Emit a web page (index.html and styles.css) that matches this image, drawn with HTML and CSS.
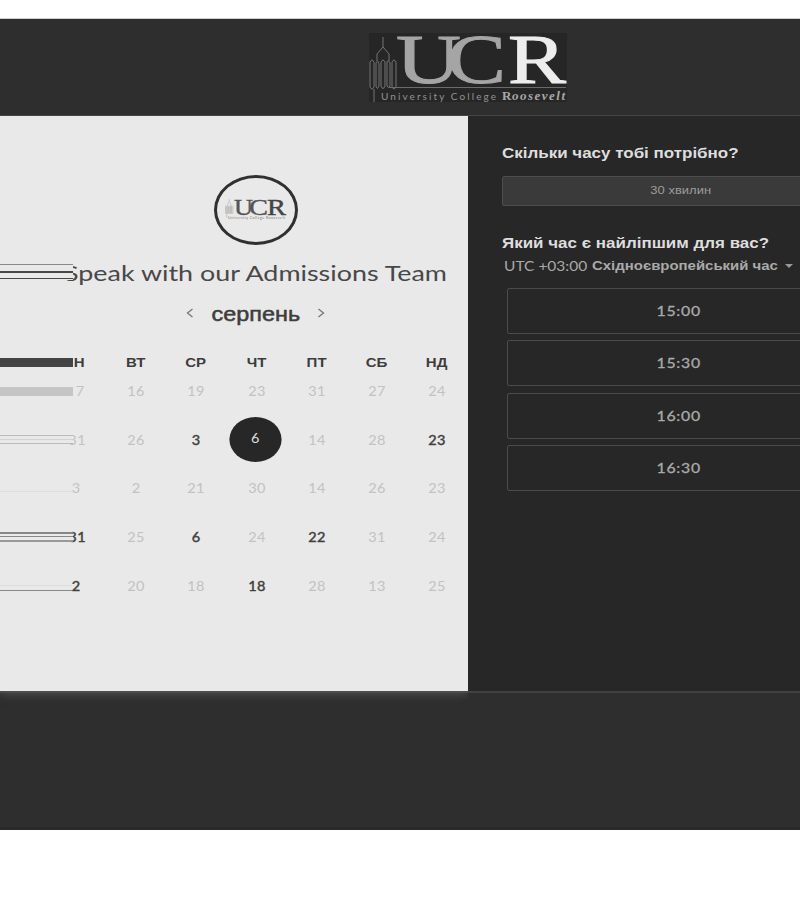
FILE: index.html
```
<!DOCTYPE html>
<html lang="uk">
<head>
<meta charset="utf-8">
<title>University College Roosevelt</title>
<link rel="stylesheet" href="styles.css">
</head>
<body>
<svg width="0" height="0" class="defs" aria-hidden="true">
  <symbol id="tower" viewBox="0 0 30 70">
    <path d="M14 4V14M14 14L8 21V28M14 14L20 21V28M1 29Q3 25 5 29V54Q3 58 1 54ZM7 30Q9 26 10 31V53Q8 58 7 53ZM12 29Q14 25 16 29V53Q14 58 12 53ZM18 29Q19 26 21 30V53Q19 56 18 53ZM23 29Q25 25 27 29V54Q25 58 23 54ZM5 56V69M20.500 54V55"/>
  </symbol>
</svg>
<main class="page">
  <header class="top">
    <svg class="logo" viewBox="0 0 198 69">
      <rect width="198" height="69" fill="#262626"/>
      <use href="#tower" width="30" height="70" class="tower"/>
      <path d="M20 54.500H197" stroke="#6b6b6b"/>
      <g class="serif" font-size="70">
        <text x="27" y="50" textLength="65" lengthAdjust="spacingAndGlyphs" fill="#a5a5a5" stroke="#a5a5a5" stroke-width="1">U</text>
        <text x="78" y="50" textLength="59" lengthAdjust="spacingAndGlyphs" fill="#a5a5a5" stroke="#a5a5a5" stroke-width="1">C</text>
        <text x="139" y="50" textLength="58" lengthAdjust="spacingAndGlyphs" fill="#ededed" stroke="#ededed" stroke-width="1">R</text>
      </g>
      <text x="12" y="66.500" class="sans" font-size="10" textLength="115" fill="#929292">University College</text>
      <text x="133" y="66.500" class="serif" font-size="13" font-weight="bold" fill="#a8a8a8">R</text>
      <text x="143" y="66.500" class="serif" font-size="13" font-weight="bold" font-style="italic" textLength="53" fill="#a8a8a8">oosevelt</text>
    </svg>
  </header>
  <div class="booking">
    <section class="calendar">
      <div class="badge">
        <svg class="mini" viewBox="0 0 62 24">
          <use href="#tower" width="9" height="20" class="mini-tower"/>
          <g class="serif" font-size="23">
            <text x="9" y="17" textLength="19" lengthAdjust="spacingAndGlyphs" fill="#555" stroke="#555" stroke-width=".4">U</text>
            <text x="24" y="17" textLength="19" lengthAdjust="spacingAndGlyphs" fill="#555" stroke="#555" stroke-width=".4">C</text>
            <text x="42" y="17" textLength="19" lengthAdjust="spacingAndGlyphs" fill="#444" stroke="#444" stroke-width=".4">R</text>
          </g>
          <text x="3" y="20.500" class="sans" font-size="3.500" textLength="57" fill="#777">University College Roosevelt</text>
        </svg>
      </div>
      <div class="title-row"><h1 class="title">Speak with our Admissions Team</h1><i class="smear smear-title"></i></div>
      <div class="month">
        <svg class="arrow" viewBox="0 0 8 10"><path d="M6.500 1L1.500 5L6.500 9"/></svg>
        <span class="month-name"><b>серпень</b></span>
        <svg class="arrow" viewBox="0 0 8 10"><path d="M1.500 1L6.500 5L1.500 9"/></svg>
      </div>
      <div class="week names"><span class="end">Н</span><span>ВТ</span><span>СР</span><span>ЧТ</span><span>ПТ</span><span>СБ</span><span>НД</span><i class="smear smear-names"></i></div>
      <div class="week"><span class="seven">7</span><span>16</span><span>19</span><span>23</span><span>31</span><span>27</span><span>24</span><i class="smear smear-1"></i></div>
      <div class="week"><span class="end">31</span><span>26</span><span class="on">3</span><span class="picked"><em>6</em></span><span>14</span><span>28</span><span class="on">23</span><i class="smear smear-2"></i></div>
      <div class="week"><span>3</span><span>2</span><span>21</span><span>30</span><span>14</span><span>26</span><span>23</span><i class="smear smear-3"></i></div>
      <div class="week"><span class="on end">31</span><span>25</span><span class="on">6</span><span>24</span><span class="on">22</span><span>31</span><span>24</span><i class="smear smear-4"></i></div>
      <div class="week"><span class="on">2</span><span>20</span><span>18</span><span class="on">18</span><span>28</span><span>13</span><span>25</span><i class="smear smear-5"></i></div>
    </section>
    <section class="options">
      <h2 class="q">Скільки часу тобі потрібно?</h2>
      <div class="duration"><span>30 хвилин</span></div>
      <h2 class="q">Який час є найліпшим для вас?</h2>
      <div class="zone"><span class="utc">UTC +03:00</span><b class="zone-name">Східноєвропейський час</b><i class="caret"></i></div>
      <div class="slots">
        <div class="slot"><span>15:00</span></div>
        <div class="slot"><span>15:30</span></div>
        <div class="slot"><span>16:00</span></div>
        <div class="slot"><span>16:30</span></div>
      </div>
    </section>
  </div>
</main>
</body>
</html>
```
FILE: styles.css
```
* { box-sizing: border-box; }
body { margin: 0; background: #fff; overflow: hidden; font-family: Lato, "Liberation Sans", sans-serif; }
.defs { position: absolute; }
.page { margin-top: 18px; height: 812px; border-top: 1px solid #cfcfcf; border-bottom: 3px solid #292929; background: #2e2e2e; overflow: hidden; }
.top { height: 97px; padding: 14px 0 0 369px; border-bottom: 1px solid #444; }
.logo { display: block; width: 198px; height: 69px; }
.tower { fill: none; stroke: #747474; stroke-width: 1; }
.mini-tower { fill: none; stroke: #999; stroke-width: 1.5; }
.serif { font-family: "Liberation Serif", serif; }
.sans { font-family: Lato, sans-serif; }
.booking { display: flex; width: 894px; height: 577px; border-bottom: 2px solid #414141; }
.calendar { width: 468px; height: 575px; background: #e9e9e9; box-shadow: 0 2px 10px #585858; clip-path: inset(0 0 -16px 0); }
.badge { width: 84px; height: 70px; margin: 59px 0 0 214px; border: 3px solid #303030; border-radius: 50%; padding: 20px 0 0 8px; }
.mini { display: block; width: 62px; height: 24px; }
.title-row { position: relative; height: 30px; margin-top: 13px; padding-left: 64px; }
.title { display: inline-block; margin: 0; font-size: 22px; line-height: 29px; font-weight: 400; color: #484848; white-space: nowrap; transform: scaleX(1.222); transform-origin: 0 50%; }
.month { display: flex; align-items: center; height: 30px; margin-top: 10px; padding-left: 186px; }
.arrow { width: 8px; height: 10px; fill: none; stroke: #777; stroke-width: 1.3; }
.month-name { display: flex; justify-content: center; width: 123px; font: 20px/30px "Liberation Sans", sans-serif; color: #3d3d3d; }
.month-name b { transform: translateY(1px) scaleX(1.17); font-weight: 400; -webkit-text-stroke: .5px #3d3d3d; }
.week { position: relative; display: grid; grid-template-columns: repeat(7, 60.2px); height: 48.7px; padding-left: 46px; font-size: 12.5px; line-height: 22px; color: #c2c2c2; letter-spacing: .4px; }
.week > span { height: 20px; text-align: center; transform: scaleX(1.16); }
.week > span.end { padding-left: 2px; }
.week > span.seven { padding-left: 7px; }
.names { height: 28px; margin-top: 25px; font: bold 12.5px/21px "Liberation Sans", sans-serif; color: #3c3c3c; letter-spacing: 0; }
.names > span { transform: translateX(-.5px) scaleX(1.2); }
.names > span.end { padding-left: 6px; }
.week > .on { color: #404040; -webkit-text-stroke: .4px #404040; }
.week > .picked { display: flex; align-items: center; justify-content: center; width: 45px; height: 45px; margin: -13px 0 0 6.500px; border-radius: 50%; background: #272727; color: #ddd; }
.picked em { font-style: normal; }
.smear { position: absolute; left: 0; width: 73px; }
.smear-title { top: 6px; height: 16px; background: linear-gradient(#888 0 1px, #e9e9e9 1px 7px, #484848 7px 9px, #e9e9e9 9px 14px, #484848 14px 15px, #e9e9e9 15px); }
.smear-names { top: 5px; height: 9px; background: #444; }
.smear-1 { top: 6px; height: 9px; background: #c5c5c5; }
.smear-2 { top: 5px; height: 9px; background: linear-gradient(#bbb 0 1px, #e9e9e9 1px 4px, #d3d3d3 4px 5px, #e9e9e9 5px 8px, #bbb 8px); }
.smear-3 { top: 5px; width: 72px; height: 9px; background: linear-gradient(#e9e9e9 8px, #dfdfdf 8px); }
.smear-4 { top: 5px; height: 10px; background: linear-gradient(#858585 0 2px, #e9e9e9 2px 4px, #888 4px 5px, #e9e9e9 5px 8px, #999 8px); }
.smear-5 { top: 5px; width: 72px; height: 10px; background: linear-gradient(#e9e9e9 4px, #ddd 4px 5px, #e9e9e9 5px 9px, #888 9px); }
.options { width: 426px; height: 575px; padding: 27px 35px 0 34px; background: #272727; }
.q { width: max-content; height: 20px; margin: 0; font: bold 14px/20px "Liberation Sans", sans-serif; color: #dedede; transform: scaleX(1.212); transform-origin: 0 50%; }
.duration { height: 30px; margin: 13px 0 27px; border: 1px solid #4d4d4d; border-radius: 2px; background: #3a3a3a; text-align: center; font: 11px/27px "Liberation Sans", sans-serif; color: #9c9c9c; }
.duration span { display: inline-block; transform: scaleX(1.18); }
.zone { display: flex; align-items: center; height: 20px; margin-top: 3px; padding-left: 2px; color: #aaa; font-size: 12.5px; white-space: nowrap; }
.utc { width: 88px; transform: scaleX(1.24); transform-origin: 0 50%; }
.zone-name { width: 193px; font: bold 12px/20px "Liberation Sans", sans-serif; transform: scaleX(1.245); transform-origin: 0 50%; flex: none; }
.utc, .caret { flex: none; }
.caret { border: 4px solid transparent; border-top-color: #999; border-bottom: 0; }
.slots { display: grid; gap: 6.300px; margin: 12px 6px 0 4.500px; }
.slot { height: 46px; border: 1px solid #4b4b4b; border-radius: 2px; text-align: center; font-size: 14px; line-height: 43px; color: #aaa; letter-spacing: .7px; }
.slot span { display: inline-block; transform: translateX(-1px) scaleX(1.13); -webkit-text-stroke: .3px #aaa; }
```
